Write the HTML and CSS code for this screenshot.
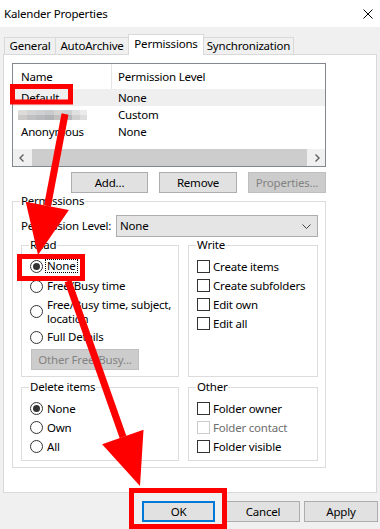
FILE: index.html
```html
<!DOCTYPE html>
<html>
<head>
<meta charset="utf-8">
<title>Kalender Properties</title>
<link rel="stylesheet" href="styles.css">
</head>
<body>
<div class="titlebar">
  <span class="title">Kalender Properties</span>
  <svg class="close" width="10" height="10" viewBox="0 0 10 10"><path d="M0.5 0.5 L9.5 9.5 M9.5 0.5 L0.5 9.5" stroke="#000" stroke-width="1" fill="none"/></svg>
</div>
<div class="tabs">
  <div class="tab t-general">General</div>
  <div class="tab t-auto">AutoArchive</div>
  <div class="tab t-perm active">Permissions</div>
  <div class="tab t-sync">Synchronization</div>
</div>
<div class="panel">
  <div class="listbox">
    <div class="lhead"><div class="c1">Name</div><div class="c2">Permission Level</div></div>
    <div class="lrow sel"><div class="c1">Default</div><div class="c2">None</div></div>
    <div class="lrow"><div class="c1"><span class="blur"></span></div><div class="c2">Custom</div></div>
    <div class="lrow"><div class="c1">Anonymous</div><div class="c2">None</div></div>
    <div class="lspace"></div>
    <div class="hscroll">
      <div class="sarrow"><svg width="6" height="8" viewBox="0 0 6 8"><path d="M4.5 0.5 L1 4 L4.5 7.5" stroke="#606060" stroke-width="1.4" fill="none"/></svg></div>
      <div class="thumb"></div>
      <div class="sarrow"><svg width="6" height="8" viewBox="0 0 6 8"><path d="M1.5 0.5 L5 4 L1.5 7.5" stroke="#606060" stroke-width="1.4" fill="none"/></svg></div>
    </div>
  </div>
  <div class="btnrow">
    <button class="btn w77">Add...</button>
    <button class="btn w78">Remove</button>
    <button class="btn w78 disabled">Properties...</button>
  </div>
  <fieldset class="group perms">
    <legend>Permissions</legend>
    <div class="perms-inner">
      <div class="levelrow">
        <span>Permission Level:</span>
        <div class="combo"><span>None</span><svg width="9" height="5" viewBox="0 0 9 5"><path d="M0.5 0.5 L4.5 4.5 L8.5 0.5" stroke="#444" stroke-width="1" fill="none"/></svg></div>
      </div>
      <div class="groups">
        <fieldset class="group">
          <legend>Read</legend>
          <div class="rlist">
            <div class="opt"><span class="radio on"></span><span class="lbl focus">None</span></div>
            <div class="opt"><span class="radio"></span><span class="lbl">Free/Busy time</span></div>
            <div class="opt tall"><span class="radio"></span><span class="lbl two">Free/Busy time, subject,<br>location</span></div>
            <div class="opt"><span class="radio"></span><span class="lbl">Full Details</span></div>
            <button class="btn disabled other">Other Free/Busy...</button>
          </div>
        </fieldset>
        <fieldset class="group">
          <legend>Write</legend>
          <div class="clist">
            <div class="copt"><span class="check"></span><span>Create items</span></div>
            <div class="copt"><span class="check"></span><span>Create subfolders</span></div>
            <div class="copt"><span class="check"></span><span>Edit own</span></div>
            <div class="copt"><span class="check"></span><span>Edit all</span></div>
          </div>
        </fieldset>
        <fieldset class="group">
          <legend>Delete items</legend>
          <div class="dlist">
            <div class="dopt"><span class="radio on"></span><span>None</span></div>
            <div class="dopt"><span class="radio"></span><span>Own</span></div>
            <div class="dopt"><span class="radio"></span><span>All</span></div>
          </div>
        </fieldset>
        <fieldset class="group">
          <legend>Other</legend>
          <div class="olist">
            <div class="copt"><span class="check"></span><span>Folder owner</span></div>
            <div class="copt dis"><span class="check"></span><span>Folder contact</span></div>
            <div class="copt"><span class="check"></span><span>Folder visible</span></div>
          </div>
        </fieldset>
      </div>
    </div>
  </fieldset>
</div>
<div class="footer">
  <button class="btn ok">OK</button>
  <button class="btn cancel">Cancel</button>
  <button class="btn apply">Apply</button>
</div>
<svg class="annot" width="380" height="529" viewBox="0 0 380 529">
  <g fill="none" stroke="#ff0000" stroke-width="5">
    <rect x="12.5" y="86.5" width="58" height="15.5"/>
    <rect x="19.5" y="256.5" width="63" height="22"/>
    <rect x="131.5" y="490.5" width="93" height="36"/>
  </g>
  <g stroke="#ff0000" stroke-width="7" fill="none">
    <line x1="65" y1="114" x2="47.5" y2="206"/>
    <line x1="68" y1="281" x2="123" y2="437"/>
  </g>
  <g fill="#ff0000">
    <polygon points="25.7,201.8 68.9,210 38,255"/>
    <polygon points="102.1,444.3 143.5,429.7 140,486"/>
  </g>
</svg>
</body>
</html>
```
FILE: styles.css
```css
* { box-sizing: border-box; }
html, body { margin: 0; padding: 0; }
body {
  width: 380px;
  height: 529px;
  overflow: hidden;
  position: relative;
  background: #f0f0f0;
  font-family: "Noto Sans", "Segoe UI", sans-serif;
  font-size: 11.5px;
  letter-spacing: -0.2px;
  line-height: 16px;
  color: #000;
}
.titlebar {
  height: 27px;
  background: #fff;
  display: flex;
  align-items: center;
  justify-content: space-between;
  padding: 0 7px 0 4px;
}
.close { display: block; }
.tabs {
  height: 27px;
  display: flex;
  align-items: flex-end;
  padding-left: 4px;
}
.tab {
  height: 17px;
  border: 1px solid #d9d9d9;
  border-bottom: none;
  margin-left: -1px;
  display: flex;
  align-items: center;
  justify-content: center;
  background: #f0f0f0;
  white-space: nowrap;
}
.tab:first-child { margin-left: 0; }
.t-general { width: 52px; }
.t-auto { width: 74px; }
.t-perm { width: 76px; }
.t-sync { width: 91px; }
.tab.active {
  height: 21px;
  background: #fff;
  margin-bottom: -1px;
  position: relative;
  z-index: 1;
  padding-bottom: 2px;
}
.panel {
  margin: 0 3px;
  height: 439px;
  border: 1px solid #d9d9d9;
  background: #fff;
  padding: 8px 50px 0 8px;
}
.listbox {
  height: 104px;
  border: 1px solid #828790;
  display: flex;
  flex-direction: column;
}
.lhead, .lrow { display: flex; align-items: center; }
.lhead { height: 25px; }
.lrow { height: 17px; }
.lrow.sel { background: #efefef; }
.c1 { width: 99px; padding-left: 8px; flex: none; }
.lhead .c1 { border-right: 1px solid #e5e5e5; height: 25px; display: flex; align-items: center; }
.c2 { padding-left: 6px; }
.blur {
  display: block;
  width: 69px;
  height: 10px;
  margin-left: -3px;
  background:
    linear-gradient(180deg, rgba(255,255,255,0.25) 0 5px, rgba(0,0,0,0.03) 5px 10px),
    linear-gradient(90deg, #d3d0cf 0 9px, #c6c6c8 9px 18px, #bfc0c2 18px 27px, #b8b9bc 27px 36px, #c9c6c6 36px 45px, #bcbfc2 45px 54px, #d6d6d6 54px 62px, #e4e4e4 62px 69px);
}
.lspace { flex: 1; }
.hscroll {
  height: 17px;
  display: flex;
  background: #f0f0f0;
}
.sarrow {
  width: 17px;
  flex: none;
  display: flex;
  align-items: center;
  justify-content: center;
}
.sarrow svg { display: block; }
.thumb { flex: 1; background: #cdcdcd; margin: 0 1px 0 2px; }
.btnrow {
  margin-top: 5px;
  display: flex;
  justify-content: flex-end;
  gap: 11px;
}
.btn {
  height: 21px;
  background: #e1e1e1;
  border: 1px solid #adadad;
  font: inherit;
  letter-spacing: inherit;
  line-height: 16px;
  color: #000;
  padding: 0;
  margin: 0;
}
.w77 { width: 77px; }
.w78 { width: 78px; }
.btn.disabled {
  background: #cccccc;
  border-color: #bfbfbf;
  color: #838383;
}
fieldset.group {
  margin: 0;
  padding: 0;
  border: 1px solid #dcdcdc;
  min-width: 0;
}
fieldset.group legend {
  padding: 0 1px;
  margin-left: 7px;
  line-height: 16px;
}
.perms { margin-top: 1px; }
.perms-inner { padding: 6px 7px 6px 8px; }
.levelrow {
  display: grid;
  grid-template-columns: 95px 1fr;
  align-items: center;
  height: 22px;
  white-space: nowrap;
}
.combo {
  height: 22px;
  border: 1px solid #adadad;
  background: #e5e5e5;
  display: flex;
  align-items: center;
  justify-content: space-between;
  padding: 0 6px 0 3px;
}
.combo svg { display: block; }
.groups {
  display: grid;
  grid-template-columns: 158px 130px;
  column-gap: 9px;
  row-gap: 2px;
}
.rlist {
  padding: 4px 0 6px 8px;
  display: flex;
  flex-direction: column;
  align-items: flex-start;
  gap: 2px;
}
.opt {
  display: flex;
  align-items: center;
  height: 18px;
  gap: 4px;
  white-space: nowrap;
}
.opt.tall { height: 29px; }
.lbl.two { line-height: 14px; }
.focus {
  margin-left: -2px;
  padding: 0 1px;
  border: 1px dotted #000;
  line-height: 12px;
}
.radio {
  width: 13px;
  height: 13px;
  border: 1px solid #333;
  border-radius: 50%;
  background: #fff;
  flex: none;
  display: flex;
  align-items: center;
  justify-content: center;
}
.radio.on::after {
  content: "";
  width: 7px;
  height: 7px;
  border-radius: 50%;
  background: #333;
}
.other { width: 108px; margin: 1px 0 0 1px; }
.clist, .olist, .dlist {
  padding: 4px 0 4px 8px;
  display: flex;
  flex-direction: column;
}
.copt {
  display: flex;
  align-items: center;
  height: 19px;
  gap: 3px;
  white-space: nowrap;
}
.dopt {
  display: flex;
  align-items: center;
  height: 19px;
  gap: 4px;
}
.check {
  width: 13px;
  height: 13px;
  border: 1px solid #333;
  background: #fff;
  flex: none;
}
.copt.dis { color: #6d6d6d; }
.copt.dis .check { border-color: #cccccc; }
.footer {
  display: flex;
  justify-content: flex-end;
  padding: 8px 2px 0 0;
}
.ok { width: 73px; margin-right: 11px; border-color: #0078d7; box-shadow: inset 0 0 0 1px #0078d7; }
.cancel { width: 74px; margin-right: 4px; }
.apply { width: 74px; }
.annot {
  position: absolute;
  left: 0;
  top: 0;
  pointer-events: none;
  z-index: 10;
}
```
